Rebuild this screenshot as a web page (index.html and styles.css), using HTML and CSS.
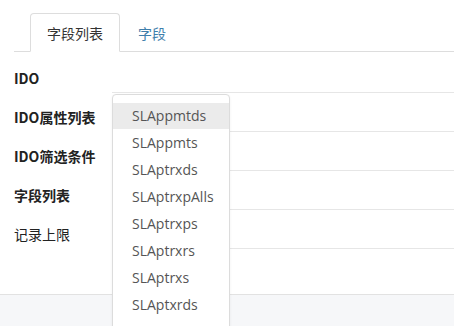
FILE: index.html
```html
<!DOCTYPE html>
<html>
<head>
<meta charset="utf-8">
<link rel="stylesheet" href="styles.css">
</head>
<body>
<div class="page">
  <div class="tabs">
    <div class="tab active">字段列表</div>
    <div class="tab">字段</div>
  </div>
  <div class="form">
    <div class="row"><div class="label bold">IDO</div><div class="value"></div></div>
    <div class="row"><div class="label bold">IDO属性列表</div><div class="value"></div></div>
    <div class="row"><div class="label bold">IDO筛选条件</div><div class="value"></div></div>
    <div class="row"><div class="label bold">字段列表</div><div class="value"></div></div>
    <div class="row"><div class="label">记录上限</div><div class="value"></div></div>
  </div>
  <div class="spacer"></div>
  <div class="footer"></div>
  <ul class="dropdown">
    <li class="hover">SLAppmtds</li>
    <li>SLAppmts</li>
    <li>SLAptrxds</li>
    <li>SLAptrxpAlls</li>
    <li>SLAptrxps</li>
    <li>SLAptrxrs</li>
    <li>SLAptrxs</li>
    <li>SLAptxrds</li>
  </ul>
</div>
</body>
</html>
```
FILE: styles.css
```css
* { box-sizing: border-box; }
html, body { margin: 0; padding: 0; background: #fff; }
body {
  font-family: "Segoe UI", "Open Sans", "Noto Sans CJK SC", sans-serif;
  font-size: 14px;
  color: #333;
  width: 454px;
  height: 326px;
  overflow: hidden;
}
.page { position: relative; height: 326px; display: flex; flex-direction: column; overflow: hidden; }
.tabs {
  margin: 13px 0 0 14px;
  padding-left: 16px;
  display: flex;
  border-bottom: 1px solid #dddddd;
  height: 39px;
}
.tab {
  height: 39px;
  padding: 0 17px;
  line-height: 38px;
  color: #3e7eab;
  font-family: "Noto Sans CJK SC", sans-serif;
  border: 1px solid transparent;
  border-radius: 4px 4px 0 0;
}
.tab.active {
  color: #333;
  border-color: #dddddd;
  border-bottom-color: #fff;
  background: #fff;
  padding: 0 16px;
}
.form { margin-top: 2px; }
.row { display: flex; height: 39px; }
.label {
  width: 112px;
  padding-left: 14px;
  display: flex;
  align-items: flex-end;
  padding-bottom: 5px;
  line-height: 20px;
  font-family: "Noto Sans CJK SC", sans-serif;
  color: #222;
}
.label.bold { font-weight: bold; }
.value { flex: 1; border-bottom: 1px solid #e6e6e6; }
.spacer { height: 45px; }
.footer { flex: 1; background: #f6f7f9; border-top: 1px solid #e2e2e2; }
.dropdown {
  position: absolute;
  left: 112px;
  top: 94px;
  width: 118px;
  height: 240px;
  margin: 0;
  padding: 8px 0 0;
  list-style: none;
  background: #fff;
  border: 1px solid #dcdcdc;
  border-radius: 4px;
  box-shadow: 0 1px 3px rgba(0,0,0,0.06);
}
.dropdown li {
  height: 27px;
  line-height: 26px;
  padding-left: 19px;
  color: #555;
  font-size: 14px;
}
.dropdown li.hover { background: #ebebeb; height: 26px; margin-bottom: 1px; }
```
